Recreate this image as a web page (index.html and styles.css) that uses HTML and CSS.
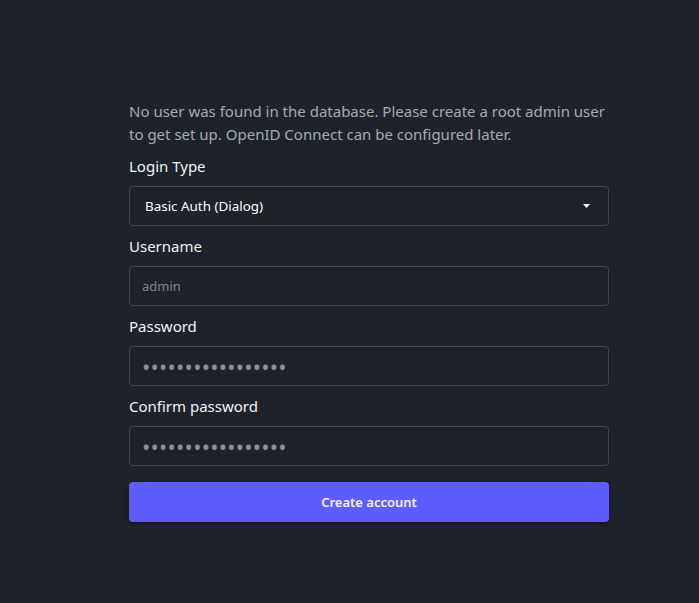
FILE: index.html
```html
<!DOCTYPE html>
<html>
<head>
<meta charset="utf-8">
<link rel="stylesheet" href="styles.css">
</head>
<body>
<main class="page">
  <form class="setup">
    <p class="intro">No user was found in the database. Please create a root admin user to get set up. OpenID Connect can be configured later.</p>
    <div class="field">
      <label class="label">Login Type</label>
      <div class="select">
        <span>Basic Auth (Dialog)</span>
        <svg class="caret" width="7" height="4" viewBox="0 0 7 4"><path d="M0 0h7L3.5 4z" fill="#fff"/></svg>
      </div>
    </div>
    <div class="field">
      <label class="label">Username</label>
      <input class="input" type="text" placeholder="admin">
    </div>
    <div class="field">
      <label class="label">Password</label>
      <input class="input pw" type="password" value="aaaaaaaaaaaaaaaaa">
    </div>
    <div class="field">
      <label class="label">Confirm password</label>
      <input class="input pw" type="password" value="aaaaaaaaaaaaaaaaa">
    </div>
    <button class="submit" type="button">Create account</button>
  </form>
</main>
</body>
</html>
```
FILE: styles.css
```css
html, body {
  margin: 0;
  padding: 0;
  background: #1e222a;
  height: 100%;
}
.page {
  display: flex;
  justify-content: flex-start;
  padding-top: 100px;
  padding-left: 129px;
  font-family: "Noto Sans", "Open Sans", sans-serif;
}
.setup {
  width: 480px;
  display: flex;
  flex-direction: column;
}
.intro {
  margin: 0 0 8px;
  color: #a7abb2;
  font-size: 15px;
  line-height: 23px;
}
.field {
  display: flex;
  flex-direction: column;
  margin-bottom: 8px;
}
.label {
  color: #f2f3f5;
  font-size: 15px;
  line-height: 24px;
  margin-bottom: 8px;
}
.select, .input {
  box-sizing: border-box;
  height: 40px;
  border: 1px solid #41454d;
  border-radius: 4px;
  background: #1e222a;
  font-family: "Noto Sans", "Open Sans", sans-serif;
  font-size: 13px;
}
.select {
  display: flex;
  align-items: center;
  justify-content: space-between;
  padding: 0 18px 0 15px;
  color: #ffffff;
  font-size: 13.4px;
}
.caret { display: block; }
.input {
  width: 100%;
  padding: 0 12px;
  color: #8a8f98;
  outline: none;
}
.input::placeholder { color: #80858e; }
.pw {
  font-size: 22px;
  letter-spacing: 0.25px;
  color: #8d9096;
}
.submit {
  margin-top: 8px;
  height: 40px;
  border: none;
  border-radius: 4px;
  background: #5f5cfd;
  color: #f4f4ff;
  font-family: "Noto Sans", "Open Sans", sans-serif;
  font-weight: 600;
  font-size: 13px;
  box-shadow: 0 2px 4px rgba(0,0,0,0.35);
}
```
